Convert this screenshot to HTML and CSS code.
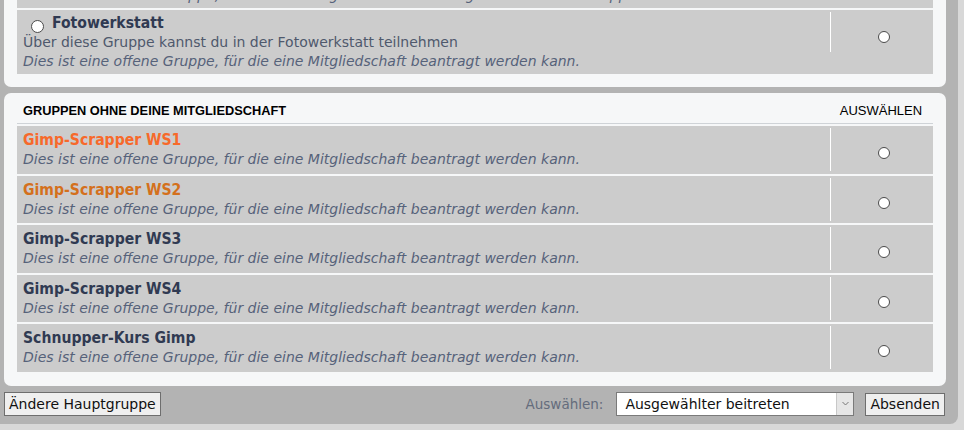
FILE: index.html
```html
<!DOCTYPE html>
<html lang="de">
<head>
<meta charset="utf-8">
<title>Gruppen</title>
<link rel="stylesheet" href="styles.css">
</head>
<body>
<div class="wrap">
  <div class="panel panel-first">
    <ul class="list">
      <li class="row row-tall row-prev">
        <div class="row-main">
          <a class="group-title" href="#">Gimp-Scrapper Forum</a>
          <span class="group-desc">Über diese Gruppe kannst du im Forum der Gimp-Scrapper mitmachen</span>
          <span class="group-type">Dies ist eine offene Gruppe, für die eine Mitgliedschaft beantragt werden kann. Gruppe</span>
        </div>
        <div class="row-mark"><input type="radio" class="radio" name="g"></div>
      </li>
      <li class="row row-tall">
        <div class="row-main">
          <div class="title-line"><input type="radio" class="radio radio-default" name="d"><a class="group-title" href="#">Fotowerkstatt</a></div>
          <span class="group-desc">Über diese Gruppe kannst du in der Fotowerkstatt teilnehmen</span>
          <span class="group-type">Dies ist eine offene Gruppe, für die eine Mitgliedschaft beantragt werden kann.</span>
        </div>
        <div class="row-mark"><input type="radio" class="radio" name="g"></div>
      </li>
    </ul>
  </div>

  <div class="panel">
    <div class="list-header">
      <span class="header-title">GRUPPEN OHNE DEINE MITGLIEDSCHAFT</span>
      <span class="header-mark">AUSWÄHLEN</span>
    </div>
    <ul class="list">
      <li class="row">
        <div class="row-main">
          <a class="group-title title-orange" href="#">Gimp-Scrapper WS1</a>
          <span class="group-type">Dies ist eine offene Gruppe, für die eine Mitgliedschaft beantragt werden kann.</span>
        </div>
        <div class="row-mark"><input type="radio" class="radio" name="g"></div>
      </li>
      <li class="row">
        <div class="row-main">
          <a class="group-title title-orange-dark" href="#">Gimp-Scrapper WS2</a>
          <span class="group-type">Dies ist eine offene Gruppe, für die eine Mitgliedschaft beantragt werden kann.</span>
        </div>
        <div class="row-mark"><input type="radio" class="radio" name="g"></div>
      </li>
      <li class="row">
        <div class="row-main">
          <a class="group-title" href="#">Gimp-Scrapper WS3</a>
          <span class="group-type">Dies ist eine offene Gruppe, für die eine Mitgliedschaft beantragt werden kann.</span>
        </div>
        <div class="row-mark"><input type="radio" class="radio" name="g"></div>
      </li>
      <li class="row">
        <div class="row-main">
          <a class="group-title" href="#">Gimp-Scrapper WS4</a>
          <span class="group-type">Dies ist eine offene Gruppe, für die eine Mitgliedschaft beantragt werden kann.</span>
        </div>
        <div class="row-mark"><input type="radio" class="radio" name="g"></div>
      </li>
      <li class="row">
        <div class="row-main">
          <a class="group-title" href="#">Schnupper-Kurs Gimp</a>
          <span class="group-type">Dies ist eine offene Gruppe, für die eine Mitgliedschaft beantragt werden kann.</span>
        </div>
        <div class="row-mark"><input type="radio" class="radio" name="g"></div>
      </li>
    </ul>
  </div>

  <div class="actions">
    <button class="btn" type="button">Ändere Hauptgruppe</button>
    <div class="actions-right">
      <label class="select-label" for="action">Auswählen:</label>
      <div class="select-box">
        <select class="select" id="action">
          <option>Ausgewählter beitreten</option>
        </select>
        <span class="select-arrow"><svg width="7" height="5" viewBox="0 0 7 5"><path d="M0.5 1 L3.5 4 L6.5 1" fill="none" stroke="#777" stroke-width="1"/></svg></span>
      </div>
      <button class="btn btn-submit" type="submit">Absenden</button>
    </div>
  </div>
</div>
</body>
</html>
```
FILE: styles.css
```css
html, body {
  margin: 0;
  padding: 0;
  height: 100%;
}

body {
  background: #d8d8d8;
  overflow: hidden;
  font-family: "DejaVu Sans", Verdana, sans-serif;
}

.wrap {
  width: 958px;
  box-sizing: border-box;
  margin-top: -56px;
  padding: 0 12px 8px 4px;
  background: #b3b3b3;
  border-radius: 0 0 8px 0;
}

.panel {
  background: #f6f7f8;
  border-radius: 7px;
  padding: 0 13px 14px;
  margin-top: 6px;
}

.panel-first {
  margin-top: 0;
  padding-bottom: 13px;
  border-radius: 0 0 7px 7px;
}

.list {
  list-style: none;
  margin: 0;
  padding: 0;
}

.row {
  display: flex;
  background: #cccccc;
  margin-top: 2px;
  padding-left: 6px;
  height: 47.5px;
  box-sizing: border-box;
}

.row-prev {
  margin-top: 0;
}

.row-tall {
  height: 64px;
}

.row-main {
  flex: 1;
  padding-top: 5px;
  min-width: 0;
  white-space: nowrap;
}

.row-tall .row-main {
  padding-top: 4px;
}

.title-line {
  display: flex;
  align-items: center;
  height: 19px;
}

.group-title {
  display: block;
  font-family: "DejaVu Sans Condensed", "DejaVu Sans", sans-serif;
  font-stretch: condensed;
  font-weight: bold;
  font-size: 15.6px;
  line-height: 19px;
  color: #303a52;
  text-decoration: none;
}

.title-orange {
  color: #f7692a;
}

.title-orange-dark {
  color: #d4701c;
}

.group-desc {
  display: block;
  font-size: 14px;
  line-height: 19px;
  color: #4f596c;
}

.group-type {
  display: block;
  font-style: italic;
  font-size: 14px;
  line-height: 19px;
  color: #56627a;
}

.row-mark {
  width: 103px;
  flex: none;
  border-left: 1px solid #ffffff;
  margin-top: 2px;
  height: 43px;
  box-sizing: border-box;
  padding-top: 19px;
  display: flex;
  justify-content: center;
  align-items: flex-start;
}

.row-tall .row-mark {
  height: 40px;
  padding-top: 19px;
}

.radio {
  -webkit-appearance: none;
  appearance: none;
  width: 12px;
  height: 12px;
  margin: 0 0 0 3px;
  border: 1px solid #4a4a4a;
  border-radius: 50%;
  background: #ffffff;
  box-sizing: border-box;
}

.radio-default {
  width: 13px;
  height: 13px;
  margin: 6px 8px 0 8px;
}

.list-header {
  display: flex;
  align-items: flex-start;
  height: 31px;
  box-sizing: border-box;
  padding: 11px 0 0 6px;
  border-bottom: 1px solid #cfd3d7;
  font-family: "Liberation Sans", Arial, sans-serif;
  font-size: 12.8px;
  line-height: 14px;
  color: #000000;
}

.header-title {
  flex: 1;
  font-weight: bold;
}

.header-mark {
  width: 104px;
  text-align: center;
  font-size: 13px;
  padding-left: 1px;
}

.actions {
  display: flex;
  justify-content: space-between;
  align-items: center;
  margin-top: 6px;
  height: 24px;
}

.btn {
  font-family: "DejaVu Sans", Verdana, sans-serif;
  font-size: 14px;
  color: #111111;
  background: #efefef;
  border: 1px solid #6e6e6e;
  height: 24px;
  padding: 0 4px;
  margin: 0;
  border-radius: 0;
}

.btn-submit {
  height: 23px;
  margin-top: 1px;
  margin-right: 1px;
}

.actions-right {
  display: flex;
  align-items: center;
  height: 24px;
}

.select-label {
  font-size: 13.5px;
  color: #646c7c;
  margin-right: 13px;
}

.select-box {
  position: relative;
  width: 238px;
  height: 24px;
  margin-right: 11px;
}

.select {
  -webkit-appearance: none;
  appearance: none;
  width: 100%;
  height: 24px;
  margin: 0;
  padding: 0 0 0 8px;
  border: 1px solid #7a7a7a;
  border-radius: 0;
  background: #ffffff;
  font-family: "DejaVu Sans", Verdana, sans-serif;
  font-size: 14px;
  color: #111111;
}

.select-arrow {
  position: absolute;
  right: 1px;
  top: 1px;
  bottom: 1px;
  width: 16px;
  background: #e6e6e6;
  border-left: 1px solid #c8c8c8;
  display: flex;
  align-items: center;
  justify-content: center;
  pointer-events: none;
}
```
